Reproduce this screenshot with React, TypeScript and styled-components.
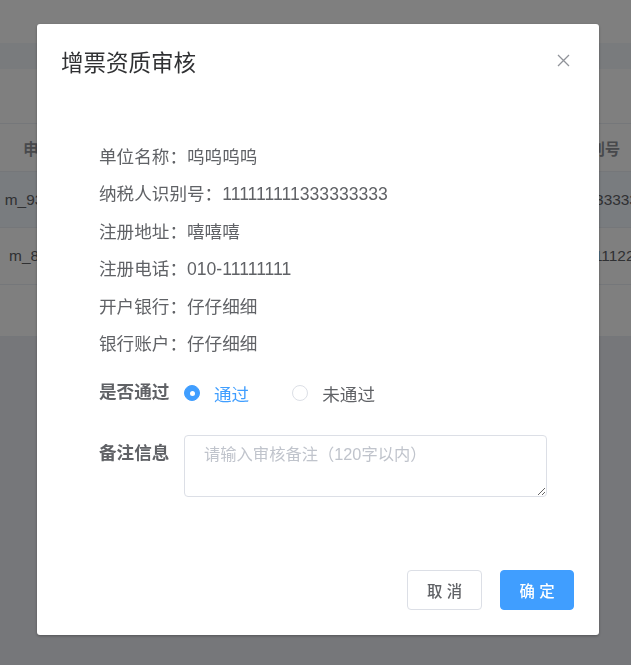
import React from "react";
import styled, { createGlobalStyle } from "styled-components";

const GlobalStyle = createGlobalStyle`
  html, body { margin: 0; padding: 0; }
  body {
    font-family: "Liberation Sans", "Noto Sans CJK SC", sans-serif;
    overflow: hidden;
    background: #eceef4;
  }
  * { box-sizing: border-box; }
`;

const FONT = `"Liberation Sans", "Noto Sans CJK SC", sans-serif`;

/* ---------- background page ---------- */
const Viewport = styled.div`
  width: 100vw;
  height: 100vh;
  overflow: hidden;
  background: #eceef4;
`;

const Page = styled.div`
  width: 700px;
  display: flex;
  flex-direction: column;
`;

const TopBar = styled.div`
  height: 43px;
  background: #ffffff;
`;

const TabBand = styled.div`
  height: 26px;
  background: #f3f6fb;
`;

const Toolbar = styled.div`
  height: 55px;
  background: #ffffff;
  border-bottom: 1px solid #ebeef5;
`;

const TableRow = styled.div<{ $h: number; $bg?: string }>`
  height: ${(p) => p.$h}px;
  display: grid;
  grid-template-columns: 108px 391px 150px 1fr;
  align-items: center;
  background: ${(p) => p.$bg || "#ffffff"};
  border-bottom: 1px solid #ebeef5;
`;

const Cell = styled.div<{ $head?: boolean }>`
  text-align: center;
  white-space: nowrap;
  font-family: ${FONT};
  font-size: 15.4px;
  font-weight: ${(p) => (p.$head ? 700 : 400)};
  color: ${(p) => (p.$head ? "#909399" : "#606266")};
`;

/* ---------- dialog ---------- */
const Overlay = styled.div`
  position: fixed;
  inset: 0;
  background: rgba(0, 0, 0, 0.5);
  display: flex;
  align-items: flex-start;
  justify-content: flex-start;
  padding: 24px 0 0 37px;
`;

const Dialog = styled.div`
  width: 562px;
  height: 611px;
  background: #ffffff;
  border-radius: 3px;
  box-shadow: 0 1px 3px rgba(0, 0, 0, 0.3);
  display: flex;
  flex-direction: column;
`;

const Header = styled.div`
  display: flex;
  justify-content: space-between;
  align-items: flex-start;
  padding: 27px 29px 0 24px;
`;

const Title = styled.div`
  font-family: ${FONT};
  font-size: 22.5px;
  line-height: 26px;
  color: #303133;
`;

const CloseBtn = styled.button`
  border: none;
  background: transparent;
  padding: 0;
  margin-top: 3px;
  width: 13px;
  height: 13px;
  display: flex;
  cursor: pointer;
`;

const Body = styled.div`
  padding: 62px 52px 0 62px;
  display: flex;
  flex-direction: column;
`;

const InfoLine = styled.div`
  font-family: ${FONT};
  font-size: 17.6px;
  line-height: 37.4px;
  height: 37.4px;
  color: #606266;
  white-space: nowrap;
`;

const FormRow = styled.div<{ $mt: number; $align?: string }>`
  display: flex;
  align-items: ${(p) => p.$align || "center"};
  margin-top: ${(p) => p.$mt}px;
`;

const FormLabel = styled.div`
  width: 85px;
  flex-shrink: 0;
  font-family: ${FONT};
  font-size: 17.6px;
  font-weight: 700;
  line-height: 37.4px;
  color: #606266;
`;

const RadioGroup = styled.div`
  display: flex;
  align-items: center;
  height: 37.4px;
`;

const RadioItem = styled.label`
  display: flex;
  align-items: center;
  margin-right: 43px;
  cursor: pointer;
`;

const RadioCircle = styled.span<{ $checked?: boolean }>`
  width: 16px;
  height: 16px;
  border-radius: 50%;
  border: 1px solid ${(p) => (p.$checked ? "#409eff" : "#dcdfe6")};
  background: ${(p) => (p.$checked ? "#409eff" : "#ffffff")};
  display: flex;
  align-items: center;
  justify-content: center;
  margin-right: 14px;
  &::after {
    content: "";
    width: 5px;
    height: 5px;
    border-radius: 50%;
    background: #ffffff;
    display: ${(p) => (p.$checked ? "block" : "none")};
  }
`;

const RadioText = styled.span<{ $checked?: boolean }>`
  font-family: ${FONT};
  font-size: 17.6px;
  color: ${(p) => (p.$checked ? "#409eff" : "#606266")};
`;

const TextArea = styled.textarea`
  width: 363px;
  height: 62px;
  border: 1px solid #dcdfe6;
  border-radius: 4px;
  padding: 7px 19px;
  font-family: ${FONT};
  font-size: 16.3px;
  line-height: 23px;
  color: #606266;
  outline: none;
  &::placeholder {
    color: #c0c4cc;
  }
`;

const Footer = styled.div`
  margin-top: auto;
  display: flex;
  justify-content: flex-end;
  gap: 18px;
  padding: 0 25px 25px 0;
`;

const Button = styled.button<{ $primary?: boolean }>`
  width: ${(p) => (p.$primary ? 74 : 75)}px;
  height: 40px;
  border-radius: 4px;
  border: 1px solid ${(p) => (p.$primary ? "#409eff" : "#dcdfe6")};
  background: ${(p) => (p.$primary ? "#409eff" : "#ffffff")};
  color: ${(p) => (p.$primary ? "#ffffff" : "#606266")};
  font-family: ${FONT};
  font-size: 15.4px;
  font-weight: 500;
  cursor: pointer;
  padding: 0;
`;

const info = [
  ["单位名称", "呜呜呜呜"],
  ["纳税人识别号", "111111111333333333"],
  ["注册地址", "嘻嘻嘻"],
  ["注册电话", "010-11111111"],
  ["开户银行", "仔仔细细"],
  ["银行账户", "仔仔细细"],
];

export default function App() {
  return (
    <>
      <GlobalStyle />
      <Viewport>
        <Page>
          <TopBar />
          <TabBand />
          <Toolbar />
          <TableRow $h={48}>
            <Cell $head>申请账号</Cell>
            <Cell $head />
            <Cell $head>纳税人识别号</Cell>
            <Cell $head />
          </TableRow>
          <TableRow $h={56} $bg="#f3f8ff">
            <Cell>m_930260418</Cell>
            <Cell />
            <Cell>111111111333333333</Cell>
            <Cell />
          </TableRow>
          <TableRow $h={57}>
            <Cell>m_81234567</Cell>
            <Cell />
            <Cell>111111111111111222</Cell>
            <Cell />
          </TableRow>
          <TableRow $h={52} />
        </Page>
      </Viewport>

      <Overlay>
        <Dialog>
          <Header>
            <Title>增票资质审核</Title>
            <CloseBtn aria-label="关闭">
              <svg width="13" height="13" viewBox="0 0 13 13">
                <path d="M1 1 L12 12 M12 1 L1 12" stroke="#909399" strokeWidth="1.3" fill="none" />
              </svg>
            </CloseBtn>
          </Header>
          <Body>
            {info.map(([k, v]) => (
              <InfoLine key={k}>
                {k}：{v}
              </InfoLine>
            ))}
            <FormRow $mt={11}>
              <FormLabel>是否通过</FormLabel>
              <RadioGroup>
                <RadioItem>
                  <RadioCircle $checked />
                  <RadioText $checked>通过</RadioText>
                </RadioItem>
                <RadioItem>
                  <RadioCircle />
                  <RadioText>未通过</RadioText>
                </RadioItem>
              </RadioGroup>
            </FormRow>
            <FormRow $mt={23} $align="flex-start">
              <FormLabel>备注信息</FormLabel>
              <TextArea placeholder="请输入审核备注（120字以内）" />
            </FormRow>
          </Body>
          <Footer>
            <Button>取 消</Button>
            <Button $primary>确 定</Button>
          </Footer>
        </Dialog>
      </Overlay>
    </>
  );
}
